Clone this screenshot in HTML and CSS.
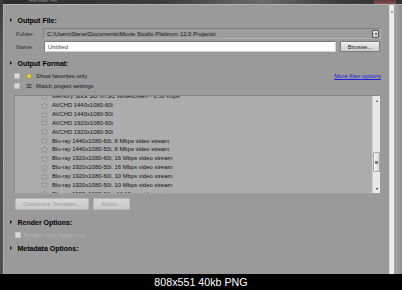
FILE: index.html
```html
<!DOCTYPE html>
<html>
<head>
<meta charset="utf-8">
<link rel="stylesheet" href="styles.css">
</head>
<body>
<div class="shot">
  <div class="window">
    <div class="edge"></div>
    <div class="win-main">
      <div class="titlebar"><span class="title">Render As</span><span class="close-glow"></span></div>
      <div class="panel">
        <div class="content">
          <div class="section-head h-file"><span class="tri"></span>Output File:</div>
          <div class="field-row r-folder">
            <span class="lbl">Folder:</span>
            <div class="combo">
              <span class="combo-text">C:\Users\Steve\Documents\Movie Studio Platinum 12.0 Projects\</span>
              <span class="combo-btn"><span class="down"></span></span>
            </div>
          </div>
          <div class="field-row r-name">
            <span class="lbl">Name:</span>
            <div class="input">Untitled</div>
            <div class="btn browse">Browse...</div>
          </div>
          <div class="section-head h-format"><span class="tri"></span>Output Format:</div>
          <div class="opt-row r-fav">
            <span class="chk"></span>
            <svg class="ico" viewBox="0 0 10 10"><path d="M5 0.6 L6.3 3.6 L9.6 3.9 L7.1 6.1 L7.9 9.4 L5 7.7 L2.1 9.4 L2.9 6.1 L0.4 3.9 L3.7 3.6 Z" fill="#f4f020" stroke="#a89a10" stroke-width="0.8"/></svg>
            <span class="opt-text">Show favorites only</span>
            <a class="more">More filter options</a>
          </div>
          <div class="opt-row r-match">
            <span class="chk"></span>
            <svg class="ico" viewBox="0 0 10 10"><path d="M1 2.5 H9 M1 5 H9 M1 7.5 H9" stroke="#2a2a2a" stroke-width="1.1"/></svg>
            <span class="opt-text">Match project settings</span>
          </div>
          <div class="list">
            <div class="list-items">
              <div class="item"><svg class="star" viewBox="0 0 10 10"><path d="M5 0.6 L6.3 3.6 L9.6 3.9 L7.1 6.1 L7.9 9.4 L5 7.7 L2.1 9.4 L2.9 6.1 L0.4 3.9 L3.7 3.6 Z"/></svg>Memory Stick SD NTSC Widescreen - 6.50 Kbps</div>
              <div class="item"><svg class="star" viewBox="0 0 10 10"><path d="M5 0.6 L6.3 3.6 L9.6 3.9 L7.1 6.1 L7.9 9.4 L5 7.7 L2.1 9.4 L2.9 6.1 L0.4 3.9 L3.7 3.6 Z"/></svg>AVCHD 1440x1080-60i</div>
              <div class="item"><svg class="star" viewBox="0 0 10 10"><path d="M5 0.6 L6.3 3.6 L9.6 3.9 L7.1 6.1 L7.9 9.4 L5 7.7 L2.1 9.4 L2.9 6.1 L0.4 3.9 L3.7 3.6 Z"/></svg>AVCHD 1440x1080-50i</div>
              <div class="item"><svg class="star" viewBox="0 0 10 10"><path d="M5 0.6 L6.3 3.6 L9.6 3.9 L7.1 6.1 L7.9 9.4 L5 7.7 L2.1 9.4 L2.9 6.1 L0.4 3.9 L3.7 3.6 Z"/></svg>AVCHD 1920x1080-60i</div>
              <div class="item"><svg class="star" viewBox="0 0 10 10"><path d="M5 0.6 L6.3 3.6 L9.6 3.9 L7.1 6.1 L7.9 9.4 L5 7.7 L2.1 9.4 L2.9 6.1 L0.4 3.9 L3.7 3.6 Z"/></svg>AVCHD 1920x1080-50i</div>
              <div class="item"><svg class="star" viewBox="0 0 10 10"><path d="M5 0.6 L6.3 3.6 L9.6 3.9 L7.1 6.1 L7.9 9.4 L5 7.7 L2.1 9.4 L2.9 6.1 L0.4 3.9 L3.7 3.6 Z"/></svg>Blu-ray 1440x1080-60i, 8 Mbps video stream</div>
              <div class="item"><svg class="star" viewBox="0 0 10 10"><path d="M5 0.6 L6.3 3.6 L9.6 3.9 L7.1 6.1 L7.9 9.4 L5 7.7 L2.1 9.4 L2.9 6.1 L0.4 3.9 L3.7 3.6 Z"/></svg>Blu-ray 1440x1080-50i, 8 Mbps video stream</div>
              <div class="item"><svg class="star" viewBox="0 0 10 10"><path d="M5 0.6 L6.3 3.6 L9.6 3.9 L7.1 6.1 L7.9 9.4 L5 7.7 L2.1 9.4 L2.9 6.1 L0.4 3.9 L3.7 3.6 Z"/></svg>Blu-ray 1920x1080-60i, 16 Mbps video stream</div>
              <div class="item"><svg class="star" viewBox="0 0 10 10"><path d="M5 0.6 L6.3 3.6 L9.6 3.9 L7.1 6.1 L7.9 9.4 L5 7.7 L2.1 9.4 L2.9 6.1 L0.4 3.9 L3.7 3.6 Z"/></svg>Blu-ray 1920x1080-50i, 16 Mbps video stream</div>
              <div class="item"><svg class="star" viewBox="0 0 10 10"><path d="M5 0.6 L6.3 3.6 L9.6 3.9 L7.1 6.1 L7.9 9.4 L5 7.7 L2.1 9.4 L2.9 6.1 L0.4 3.9 L3.7 3.6 Z"/></svg>Blu-ray 1920x1080-60i, 10 Mbps video stream</div>
              <div class="item"><svg class="star" viewBox="0 0 10 10"><path d="M5 0.6 L6.3 3.6 L9.6 3.9 L7.1 6.1 L7.9 9.4 L5 7.7 L2.1 9.4 L2.9 6.1 L0.4 3.9 L3.7 3.6 Z"/></svg>Blu-ray 1920x1080-50i, 10 Mbps video stream</div>
              <div class="item"><svg class="star" viewBox="0 0 10 10"><path d="M5 0.6 L6.3 3.6 L9.6 3.9 L7.1 6.1 L7.9 9.4 L5 7.7 L2.1 9.4 L2.9 6.1 L0.4 3.9 L3.7 3.6 Z"/></svg>Blu-ray 1920x1080-24p, 16 Mbps video stream</div>
            </div>
            <div class="vscroll">
              <div class="sb-arrow"><span class="up"></span></div>
              <div class="sb-track"><div class="thumb"><span class="grip"></span></div></div>
              <div class="sb-arrow"><span class="down"></span></div>
            </div>
          </div>
          <div class="btn-row">
            <div class="btn dis wide">Customize Template...</div>
            <div class="btn dis about">About...</div>
          </div>
          <div class="section-head h-render"><span class="tri"></span>Render Options:</div>
          <div class="opt-row r-loop">
            <span class="chk dis"></span>
            <span class="dim">Render loop region only</span>
          </div>
          <div class="section-head h-meta"><span class="tri"></span>Metadata Options:</div>
        </div>
        <div class="outer-scroll"><span class="up"></span></div>
        <div class="right-gap"></div>
      </div>
    </div>
  </div>
  <div class="caption">808x551 40kb PNG</div>
</div>
</body>
</html>
```

FILE: styles.css
```css
* { box-sizing: border-box; }
html, body { margin: 0; padding: 0; background: #000; }
body { font-family: "Liberation Sans", Arial, sans-serif; }

.shot { width: 402px; height: 290px; display: flex; flex-direction: column; overflow: hidden; }

.window { height: 274px; display: flex; }
.edge { width: 3px; background: linear-gradient(#3a3a3a, #555 20%, #4e4e4e); }
.win-main { flex: 1; display: flex; flex-direction: column; }

.titlebar {
  height: 4px; overflow: hidden; display: flex;
  background: linear-gradient(90deg, #2c2c2c 0%, #3c3c3c 40%, #6a6a6a 65%, #3a3a3a 85%, #333 100%);
}
.title { font-size: 6px; line-height: 6px; margin-top: -3px; margin-left: 26px; color: #8a8a8a; }
.close-glow { margin-left: auto; margin-right: 6px; width: 22px; background: linear-gradient(#5a3a3a, #8a5050); }

.panel {
  flex: 1; display: flex; background: #9a9a9a;
  border-top: 1px solid #b2b2b2; border-left: 1px solid #b2b2b2;
}
.content { flex: 1; display: flex; flex-direction: column; padding-right: 8px; font-size: 5.9px; color: #161616; }

.outer-scroll { width: 5px; background: #ededed; border-left: 1px solid #d8d8d8; display: flex; justify-content: center; padding-top: 6px; }
.outer-scroll .up { width: 0; height: 0; border-left: 1.5px solid transparent; border-right: 1.5px solid transparent; border-bottom: 2px solid #555; }
.right-gap { width: 8px; background: linear-gradient(90deg, #a2a2a2, #9a9a9a 60%, #8a8a8a); }

.section-head {
  height: 10px; display: flex; align-items: center; padding-left: 6px;
  font-weight: bold; font-size: 7px; color: #000;
}
.tri { width: 0; height: 0; border-top: 2px solid transparent; border-bottom: 2px solid transparent; border-left: 2.5px solid #111; margin-right: 5.5px; }
.h-file { margin-top: 10px; }
.h-format { margin-top: 6px; }
.h-render { margin-top: 7px; }
.h-meta { margin-top: 3px; }

.field-row { height: 11px; display: flex; align-items: stretch; padding-left: 12px; }
.r-folder { margin-top: 3px; }
.r-name { margin-top: 2px; }
.lbl { width: 27px; display: flex; align-items: center; color: #2e2e2e; }

.combo {
  flex: 1; display: flex; align-items: center; padding-left: 3px;
  border: 1px solid #7e7e7e; border-right-color: #b0b0b0; border-bottom-color: #b0b0b0;
  background: #9c9c9c; color: #141414;
}
.combo-text { flex: 1; white-space: nowrap; overflow: hidden; }
.combo-btn {
  width: 7px; height: 8px; margin-right: 1px; display: flex; align-items: center; justify-content: center;
  background: linear-gradient(#e2e2e2, #c4c4c4); border: 1px solid #555; border-radius: 1px;
}
.down { width: 0; height: 0; border-left: 1.5px solid transparent; border-right: 1.5px solid transparent; border-top: 2px solid #222; }
.up { width: 0; height: 0; border-left: 1.5px solid transparent; border-right: 1.5px solid transparent; border-bottom: 2px solid #444; }

.input {
  flex: 1; margin-left: 1px; display: flex; align-items: center; padding-left: 3px;
  background: #fff; border: 1px solid #7a7a7a; border-right-color: #cfcfcf; border-bottom-color: #cfcfcf; color: #444;
}
.btn {
  display: flex; align-items: center; justify-content: center;
  border: 1px solid #7a7a7a; border-radius: 1px;
  background: linear-gradient(#efefef, #dcdcdc 50%, #cdcdcd); color: #1e1e1e;
}
.browse { width: 40px; margin-left: 4px; margin-right: 1px; }

.opt-row { height: 10px; display: flex; align-items: center; padding-left: 10px; }
.r-fav { margin-top: 3px; }
.chk { width: 6px; height: 6px; background: linear-gradient(#e2e2e2, #cdcdcd); border: 1px solid #b9b9b9; margin-right: 6px; }
.ico { width: 6px; height: 6px; margin-right: 4px; }
.opt-text { color: #141414; }
.more { margin-left: auto; color: #1f1fe0; text-decoration: underline; }

.list {
  margin-top: 4px; margin-left: 10px; margin-right: 1px; height: 99px; display: flex;
  border-top: 1px solid #858585; border-left: 1px solid #8e8e8e; border-bottom: 1px solid #a2a2a2;
  background: #acacac;
}
.list-items { flex: 1; overflow: hidden; }
.list-items .item:first-child { margin-top: -4px; }
.item { height: 8.85px; display: flex; align-items: center; padding-left: 26px; white-space: nowrap; color: #111; }
.star { width: 7px; height: 7px; margin-right: 4px; fill: #b6b6b6; stroke: #7e7e7e; stroke-width: 0.8; }

.vscroll { width: 8px; background: #e8e8e8; border-left: 1px solid #d2d2d2; display: flex; flex-direction: column; }
.sb-arrow { height: 9px; display: flex; align-items: center; justify-content: center; }
.sb-track { flex: 1; }
.thumb {
  margin-top: 47px; height: 20px;
  border: 1px solid #a4a4a4; border-radius: 1px; background: linear-gradient(90deg, #f4f4f4, #dadada);
  display: flex; align-items: center; justify-content: center;
}
.grip { width: 3px; height: 3px; background: #7a7a7a; }

.btn-row { margin-top: 4px; padding-left: 11px; display: flex; gap: 4px; }
.btn.dis { height: 12px; background: linear-gradient(#d6d6d6, #cacaca); border: 1px solid #b8b8b8; color: #9c9c9c; }
.wide { width: 74px; }
.about { width: 37px; }

.r-loop { margin-top: 3px; padding-left: 11px; }
.chk.dis { width: 5.5px; height: 6px; background: #d6d6d6; border-color: #c2c2c2; margin-right: 3px; }
.dim { color: #b6b6b6; }

.caption {
  height: 16px; background: #000; color: #fff; text-align: center;
  font-family: "Liberation Sans", Arial, sans-serif; font-size: 10.7px; line-height: 16px;
}
```
